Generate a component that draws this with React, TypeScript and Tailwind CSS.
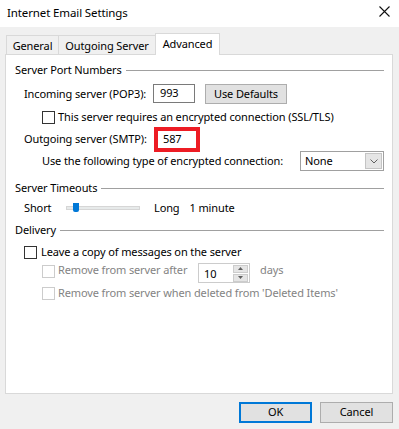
import React from "react";

const F = { fontFamily: '"Noto Sans", "Open Sans", sans-serif' };

function Check({ disabled }: { disabled?: boolean }) {
  return (
    <div
      className={`w-[13px] h-[13px] shrink-0 bg-white border ${
        disabled ? "border-[#cccccc]" : "border-[#333333]"
      }`}
    />
  );
}

function Section({ title }: { title: string }) {
  return (
    <div className="flex items-center h-[16px] pl-[9px] pr-[8px]">
      <span className="leading-[16px]">{title}</span>
      <div className="flex-1 h-px bg-[#a0a0a0] ml-[4px] mt-[1px]" />
    </div>
  );
}

export default function App() {
  return (
    <div
      className="w-[399px] h-[429px] bg-[#f0f0f0] text-[11px] tracking-[-0.12px] text-black overflow-hidden"
      style={F}
    >
      {/* Title bar */}
      <div className="h-[27px] bg-white flex items-center justify-between pl-[7px] pr-[9px]">
        <span className="text-[11.5px] leading-[16px] mt-[-2px]">Internet Email Settings</span>
        <svg width="11" height="11" viewBox="0 0 11 11" className="mt-[-4px]">
          <path d="M0.5 0.5 L10.5 10.5 M10.5 0.5 L0.5 10.5" stroke="#111" strokeWidth="1.1" />
        </svg>
      </div>

      {/* Tabs */}
      <div className="flex items-end h-[22px] mt-[6px] pl-[6px]">
        <div className="w-[52px] h-[20px] border-t border-l border-[#d9d9d9] flex items-center justify-center leading-[14px] pt-[1px]">
          General
        </div>
        <div className="w-[97px] h-[20px] border-t border-l border-[#d9d9d9] flex items-center justify-center leading-[14px] pt-[1px]">
          Outgoing Server
        </div>
        <div className="relative z-10 w-[65px] h-[22px] bg-white border-t border-l border-r border-[#d9d9d9] flex items-center justify-center leading-[14px] pb-[1px]">
          Advanced
        </div>
      </div>

      {/* Panel */}
      <div className="ml-[5px] mt-[-1px] w-[388px] h-[340px] bg-white border border-[#d9d9d9]">
        <div className="mt-[7px]">
          <Section title="Server Port Numbers" />
        </div>

        {/* Incoming */}
        <div className="flex items-center h-[20px] mt-[6px] pl-[18px]">
          <span className="w-[129px] shrink-0">Incoming server (POP3):</span>
          <div className="w-[42px] h-[19px] border border-[#7a7a7a] flex items-center pl-[6px] mt-[-1px]">
            993
          </div>
          <div className="ml-[10px] w-[82px] h-[20px] bg-[#e1e1e1] border border-[#adadad] flex items-center justify-center">
            Use Defaults
          </div>
        </div>

        {/* SSL checkbox */}
        <div className="flex items-center h-[14px] mt-[6px] pl-[36px]">
          <Check />
          <span className="ml-[3px]">This server requires an encrypted connection (SSL/TLS)</span>
        </div>

        {/* Outgoing */}
        <div className="flex items-center h-[24px] mt-[3px] pl-[18px]">
          <span className="w-[130px] shrink-0">Outgoing server (SMTP):</span>
          <div className="w-[46px] h-[25px] border-[4px] border-[#ed1c24] flex items-center pl-[5px]">
            587
          </div>
        </div>

        {/* Encryption type */}
        <div className="flex items-center h-[20px] pl-[36px]">
          <span className="w-[258px] shrink-0">Use the following type of encrypted connection:</span>
          <div className="w-[84px] h-[20px] border border-[#a0a0a0] bg-white flex items-center justify-between pl-[4px] pr-[1px]">
            <span>None</span>
            <div className="w-[17px] h-[16px] bg-[#e5e5e5] border border-[#c4c4c4] flex items-center justify-center">
              <svg width="8" height="5" viewBox="0 0 8 5">
                <path d="M0.5 0.5 L4 4 L7.5 0.5" fill="none" stroke="#606060" strokeWidth="1" />
              </svg>
            </div>
          </div>
        </div>

        <div className="mt-[9px]">
          <Section title="Server Timeouts" />
        </div>

        {/* Slider */}
        <div className="flex items-center h-[16px] mt-[4px] pl-[18px]">
          <span className="w-[42px] shrink-0">Short</span>
          <div className="relative w-[74px] h-[4px] bg-[#e7eaea] border border-[#d6d6d6]">
            <div className="absolute left-[6px] top-[-4px] w-[6px] h-[9px] bg-[#0078d7] rounded-b-[2px]" />
          </div>
          <span className="ml-[14px]">Long</span>
          <span className="ml-[10px]">1 minute</span>
        </div>

        <div className="mt-[6px]">
          <Section title="Delivery" />
        </div>

        {/* Leave copy */}
        <div className="flex items-center h-[14px] mt-[7px] pl-[18px]">
          <Check />
          <span className="ml-[4px]">Leave a copy of messages on the server</span>
        </div>

        {/* Remove after */}
        <div className="flex items-start h-[20px] mt-[4px] pl-[36px] text-[#838383]">
          <div className="mt-[2px]">
            <Check disabled />
          </div>
          <span className="ml-[3px] w-[140px] shrink-0 leading-[14px]">Remove from server after</span>
          <div className="w-[52px] h-[20px] border border-[#cccccc] bg-white flex items-center justify-between pl-[5px] pr-[1px] text-black">
            <span className="mt-[2px]">10</span>
            <div className="flex flex-col gap-px">
              <div className="w-[15px] h-[8px] bg-[#e5e5e5] border border-[#cccccc] flex items-center justify-center">
                <svg width="5" height="3" viewBox="0 0 5 3">
                  <path d="M0 3 L2.5 0 L5 3 Z" fill="#606060" />
                </svg>
              </div>
              <div className="w-[15px] h-[8px] bg-[#e5e5e5] border border-[#cccccc] flex items-center justify-center">
                <svg width="5" height="3" viewBox="0 0 5 3">
                  <path d="M0 0 L2.5 3 L5 0 Z" fill="#606060" />
                </svg>
              </div>
            </div>
          </div>
          <span className="ml-[10px] leading-[14px]">days</span>
        </div>

        {/* Remove deleted */}
        <div className="flex items-center h-[14px] mt-[3px] pl-[36px] text-[#838383]">
          <Check disabled />
          <span className="ml-[3px]">Remove from server when deleted from 'Deleted Items'</span>
        </div>
      </div>

      {/* Buttons */}
      <div className="flex justify-end gap-[8px] mt-[8px] pr-[6px]">
        <div className="w-[73px] h-[21px] bg-[#e1e1e1] border-2 border-[#0078d7] flex items-center justify-center">
          OK
        </div>
        <div className="w-[73px] h-[21px] bg-[#e1e1e1] border border-[#adadad] flex items-center justify-center">
          Cancel
        </div>
      </div>
    </div>
  );
}
